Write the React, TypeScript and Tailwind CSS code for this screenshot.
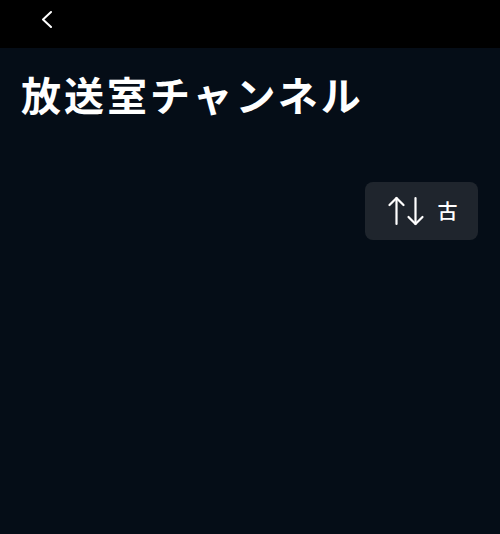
import React from 'react';

const SortIcon = () => (
  <svg width="38" height="30" viewBox="0 0 38 30" fill="none" stroke="currentColor" strokeWidth="2.2" strokeLinecap="round" strokeLinejoin="round">
    <path d="M8.5 28V2" />
    <path d="M1.5 9l7-7 7 7" />
    <path d="M27.5 2v26" />
    <path d="M20.5 21l7 7 7-7" />
  </svg>
);

export default function App() {
  return (
    <div className="w-[500px] h-[534px] bg-[#050d17] text-white flex flex-col" style={{ fontFamily: '"Noto Sans CJK JP", "Noto Sans", sans-serif' }}>
      <div className="h-[48px] bg-black flex items-start pl-[40px] pt-[10px]">
        <svg width="14" height="18" viewBox="0 0 14 18" fill="none" stroke="white" strokeWidth="2" strokeLinecap="round" strokeLinejoin="round">
          <path d="M11 2L3 9.5 11 17" />
        </svg>
      </div>
      <h1 className="px-[21px] pt-[16px] text-[40px] font-bold leading-[60px] tracking-[3px]">放送室チャンネル</h1>
      <div className="flex justify-end pr-[22px] pt-[58px]">
        <button className="w-[113px] h-[58px] rounded-[8px] bg-[#1f252d] flex items-center justify-center gap-[12px] pl-[2px]">
          <SortIcon />
          <span className="text-[20px] font-medium">古</span>
        </button>
      </div>
    </div>
  );
}
